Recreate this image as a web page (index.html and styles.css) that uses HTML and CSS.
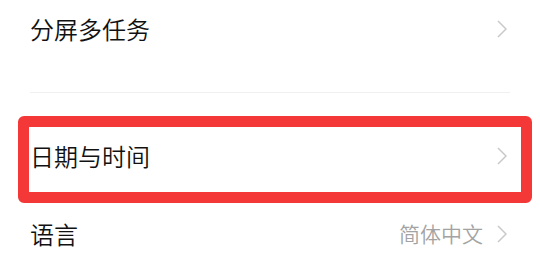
FILE: index.html
```html
<!DOCTYPE html>
<html lang="zh-CN">

<head>
  <meta charset="UTF-8">
  <meta name="viewport" content="width=device-width, initial-scale=1.0">
  <title>设置</title>
  <link rel="stylesheet" href="styles.css">
</head>

<body>
  <div class="settings">
    <div class="group group-top">
      <div class="row">
        <span class="label">分屏多任务</span>
        <svg class="chevron" viewBox="0 0 10 18"><polyline points="1,1 9,9 1,17" /></svg>
      </div>
    </div>

    <div class="group">
      <div class="row row-marked">
        <span class="label">日期与时间</span>
        <svg class="chevron" viewBox="0 0 10 18"><polyline points="1,1 9,9 1,17" /></svg>
        <div class="highlight"></div>
      </div>
      <div class="row">
        <span class="label">语言</span>
        <span class="value">简体中文</span>
        <svg class="chevron" viewBox="0 0 10 18"><polyline points="1,1 9,9 1,17" /></svg>
      </div>
    </div>
  </div>
</body>

</html>
```

FILE: styles.css
```css
* {
  box-sizing: border-box;
  margin: 0;
  padding: 0;
}

body {
  font-family: "Noto Sans CJK SC", "Noto Sans", sans-serif;
  background-color: #fff;
  color: #111;
  width: 540px;
  height: 275px;
  overflow: hidden;
}

.group-top {
  padding-bottom: 32px;
  margin: 0 30px 25px 30px;
  border-bottom: 1px solid #f0f0f0;
}

.group-top .row {
  height: 60px;
  padding: 0 3px 3px 0;
}

.row {
  position: relative;
  display: flex;
  align-items: center;
  height: 78px;
  padding: 0 33px 3px 30px;
}

.label {
  flex: 1;
  font-size: 24px;
  font-weight: 350;
  line-height: 1;
}

.value {
  font-size: 21px;
  font-weight: 350;
  line-height: 1;
  color: #a3a3a3;
  margin-right: 14px;
}

.chevron {
  width: 10px;
  height: 18px;
  fill: none;
  stroke: #c8c8c8;
  stroke-width: 1.5;
}

.highlight {
  position: absolute;
  top: -2px;
  left: 18px;
  right: 8px;
  bottom: -7px;
  border: 11px solid #f43838;
  border-radius: 6px;
  pointer-events: none;
  z-index: 2;
}
```
